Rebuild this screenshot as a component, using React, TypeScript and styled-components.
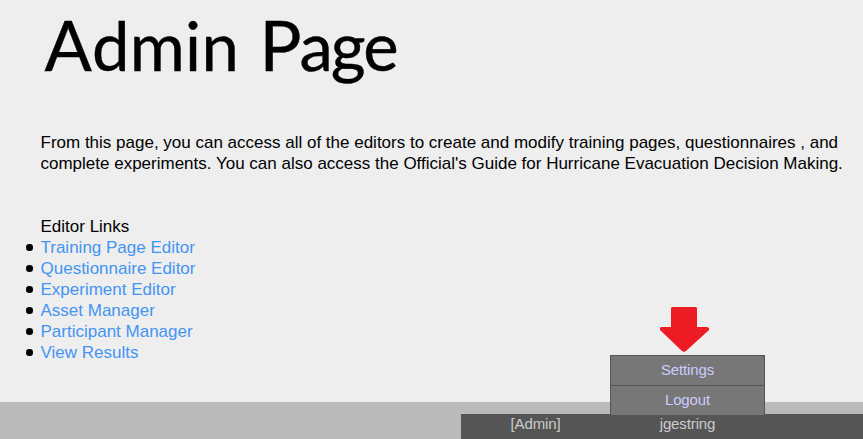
import React from "react";
import styled, { createGlobalStyle } from "styled-components";

const GlobalStyle = createGlobalStyle`
  body {
    margin: 0;
    background: #eeeeee;
    color: #000;
    font: 17px/21px "Liberation Sans", Arial, sans-serif;
    overflow: hidden;
  }
`;

const Page = styled.div`
  display: flex;
  flex-direction: column;
  height: 439px;
`;

const Content = styled.main`
  flex: 1;
  padding: 0 0 0 40.5px;
`;

const Title = styled.h1`
  display: flex;
  gap: 22px;
  margin: 0 0 0 4px;
  padding-top: 2px;
  height: 127px;
  box-sizing: border-box;
  font: 400 69px/84px Lato, sans-serif;
  white-space: nowrap;
`;

const Word = styled.span<{ $width: number; $spacing: number }>`
  width: ${(p) => p.$width}px;
  font-size: 67px;
  letter-spacing: ${(p) => p.$spacing}px;
  -webkit-text-stroke: 0.4px #000;

  &::first-letter {
    font-size: 70px;
  }
`;

const Intro = styled.p`
  margin: 5px 0 42px;
  white-space: nowrap;
`;

const Line = styled.span`
  display: block;
`;

const LinksTitle = styled.div``;

const Links = styled.ul`
  margin: 0;
  padding: 0;
  list-style: none;
`;

const LinkItem = styled.li`
  display: flex;
  align-items: center;
  height: 21px;
  margin-left: -14.5px;

  &::before {
    content: "";
    width: 6.5px;
    height: 6.5px;
    margin-right: 8px;
    border-radius: 50%;
    background: #000;
  }
`;

const Link = styled.a`
  color: #4494f5;
  text-decoration: none;
`;

const Footer = styled.footer`
  display: flex;
  justify-content: flex-end;
  align-items: flex-end;
  height: 37px;
  background: #bababa;
`;

const UserBar = styled.div`
  display: flex;
  width: 402px;
  height: 25px;
  background: #555;
  color: #ccc;
  font-size: 15px;
  letter-spacing: -0.12px;
  line-height: 20px;
  text-align: center;
`;

const Role = styled.div`
  width: 149px;
`;

const Account = styled.div`
  position: relative;
  width: 155px;
`;

const Menu = styled.nav`
  position: absolute;
  bottom: 24px;
  left: 0;
  box-sizing: border-box;
  width: 155px;
  border: 1px solid #555;
  border-bottom: 0;
  background: #777;
`;

const MenuItem = styled.a`
  display: block;
  height: 29px;
  line-height: 28px;
  color: #ccccff;

  & + & {
    border-top: 1px solid #555;
  }
`;

const Arrow = styled.svg`
  position: absolute;
  left: 49px;
  bottom: 86px;
  width: 51px;
  height: 47px;
`;

const editors = [
  "Training Page Editor",
  "Questionnaire Editor",
  "Experiment Editor",
  "Asset Manager",
  "Participant Manager",
  "View Results",
];

export default function App() {
  return (
    <Page>
      <GlobalStyle />
      <Content>
        <Title>
          <Word $width={193} $spacing={0.2}>Admin</Word>{" "}
          <Word $width={140} $spacing={-2}>Page</Word>
        </Title>
        <Intro>
          <Line>
            From this page, you can access all of the editors to create and modify training pages, questionnaires , and
          </Line>
          <Line>
            complete experiments. You can also access the Official's Guide for Hurricane Evacuation Decision Making.
          </Line>
        </Intro>
        <LinksTitle>Editor Links</LinksTitle>
        <Links>
          {editors.map((name) => (
            <LinkItem key={name}>
              <Link>{name}</Link>
            </LinkItem>
          ))}
        </Links>
      </Content>
      <Footer>
        <UserBar>
          <Role>[Admin]</Role>
          <Account>
            <Arrow viewBox="0 0 51 47">
              <path
                d="M13 1H37L38 2V21H48L50 22V24L27 45L25 46L23 45L1 24V22L2 21H12V2Z"
                fill="#ed1c24"
              />
            </Arrow>
            <Menu>
              <MenuItem>Settings</MenuItem>
              <MenuItem>Logout</MenuItem>
            </Menu>
            jgestring
          </Account>
        </UserBar>
      </Footer>
    </Page>
  );
}
